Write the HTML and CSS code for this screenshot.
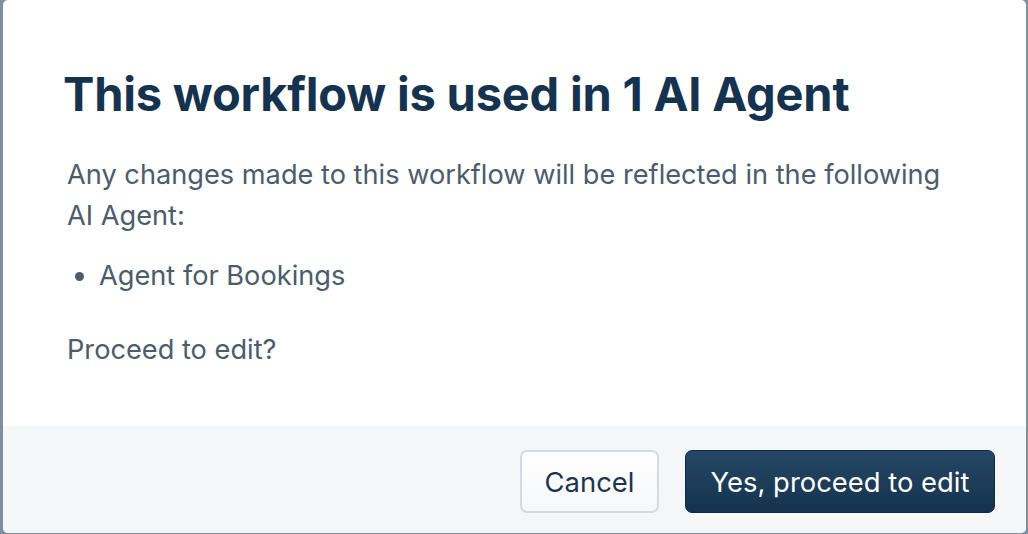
FILE: index.html
```html
<!DOCTYPE html>
<html lang="en">
<head>
<meta charset="utf-8">
<title>Workflow used in AI Agent</title>
<link rel="stylesheet" href="styles.css">
</head>
<body>
<div class="backdrop">
  <div class="modal">
    <div class="modal-body">
      <h1 class="title">This workflow is used in 1 AI Agent</h1>
      <p class="text">Any changes made to this workflow will be reflected in the following AI Agent:</p>
      <ul class="agents">
        <li>Agent for Bookings</li>
      </ul>
      <p class="text">Proceed to edit?</p>
    </div>
    <div class="modal-footer">
      <button class="btn btn-secondary">Cancel</button>
      <button class="btn btn-primary">Yes, proceed to edit</button>
    </div>
  </div>
</div>
</body>
</html>
```
FILE: styles.css
```css
html, body {
  margin: 0;
  padding: 0;
  height: 100%;
}
body {
  background: #7f8fa1;
  font-family: Inter, "Noto Sans", sans-serif;
  overflow: hidden;
}
.backdrop {
  height: 100%;
  padding: 0 2px 1px 3px;
  box-sizing: border-box;
  display: flex;
}
.modal {
  flex: 1;
  background: #ffffff;
  border-radius: 5px;
  overflow: hidden;
  display: flex;
  flex-direction: column;
}
.modal-body {
  flex: 1;
  padding: 66px 60px 0 64px;
}
.title {
  margin: 0 0 32px -4px;
  font-size: 47px;
  font-weight: 700;
  line-height: 56px;
  color: #15334f;
  letter-spacing: -0.2px;
}
.text {
  margin: 0;
  font-size: 27.2px;
  line-height: 41px;
  color: #4b5c6c;
}
.agents {
  margin: 19px 0 33px;
  padding-left: 32px;
  font-size: 27.2px;
  line-height: 41px;
  color: #4b5c6c;
}
.modal-footer {
  box-sizing: border-box;
  height: 107px;
  background: #f5f6f8;
  display: flex;
  align-items: center;
  justify-content: flex-end;
  gap: 26px;
  padding-right: 31px;
  padding-top: 4px;
}
.btn {
  height: 63px;
  border-radius: 7px;
  font-family: Inter, "Noto Sans", sans-serif;
  font-size: 27.4px;
  padding: 0 20px;
  cursor: pointer;
}
.btn-secondary {
  background: linear-gradient(#ffffff, #f6f7f9);
  border: 2px solid #d4dae1;
  color: #1b3550;
  width: 139px;
}
.btn-primary {
  background: linear-gradient(#264865, #14324d);
  border: 1px solid #112a42;
  color: #ffffff;
  width: 310px;
}
```
